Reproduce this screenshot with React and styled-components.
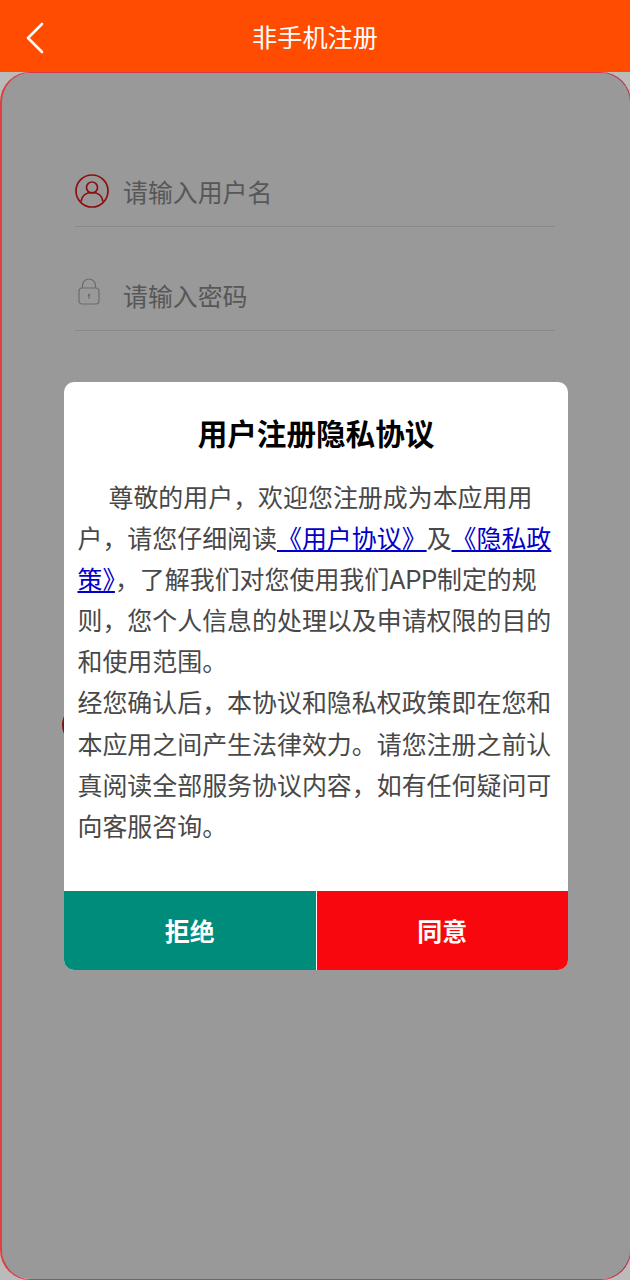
import React from "react";
import styled, { createGlobalStyle } from "styled-components";

const Global = createGlobalStyle`
  html, body { margin: 0; padding: 0; background: #bbb; }
  * { box-sizing: border-box; }
`;

const Page = styled.div`
  width: 630px;
  height: 1280px;
  display: flex;
  flex-direction: column;
  overflow: hidden;
  font-family: Roboto, "Noto Sans CJK SC", sans-serif;
  background: #bbb;
`;

const Header = styled.header`
  position: relative;
  height: 72px;
  flex: none;
  display: flex;
  align-items: center;
  justify-content: center;
  background: #ff4c00;
  color: #fff;
  font-size: 25.2px;
`;

const BackButton = styled.span`
  position: absolute;
  left: 24px;
  top: 22px;
  display: block;
  width: 22px;
  height: 32px;
`;

const Card = styled.main`
  position: relative;
  flex: 1;
  width: 631px;
  background: #fff;
  border: 1px solid #d93a4a;
  border-left: 2px solid #e2403c;
  border-radius: 30px;
  padding: 81px 0 0 73px;
`;

const Field = styled.div`
  width: 480px;
  height: 73px;
  margin-bottom: 31px;
  display: flex;
  align-items: center;
  border-bottom: 1px solid #e4e4e4;
  font-size: 24.9px;
  color: #929292;
`;

const IconSlot = styled.span`
  width: 48px;
  flex: none;
  display: flex;
  padding-left: ${(p) => p.$inset}px;
  margin-top: ${(p) => p.$top}px;
`;

const Placeholder = styled.span`
  margin-top: 2px;
`;

const Submit = styled.button`
  display: block;
  width: 490px;
  height: 40px;
  margin: 374px 0 0 -13px;
  border: 0;
  border-radius: 20px;
  background: #e01818;
`;

const Overlay = styled.div`
  position: absolute;
  inset: 0;
  display: flex;
  align-items: center;
  justify-content: center;
  border-radius: 28px;
  background: rgba(0, 0, 0, 0.4);
`;

const Dialog = styled.section`
  width: 504px;
  height: 588px;
  display: flex;
  flex-direction: column;
  overflow: hidden;
  border-radius: 10px;
  background: #fff;
`;

const Title = styled.h2`
  margin: 33px 0 0;
  text-align: center;
  font-size: 29.6px;
  line-height: 40px;
  font-weight: 700;
  color: #000;
`;

const Body = styled.div`
  flex: 1;
  padding: 23px 13px 0 13.5px;
  font-size: 24.95px;
  line-height: 41.1px;
  color: #484848;
`;

const Para = styled.p`
  margin: 0;
  text-indent: ${(p) => p.$indent || 0}px;
`;

const Link = styled.a`
  color: #0000c8;
  text-decoration: underline;
`;

const Actions = styled.div`
  display: flex;
  height: 79px;
  flex: none;
`;

const Action = styled.button`
  flex: 1;
  border: 0;
  padding: 0 0 2px;
  font: 700 25px Roboto, "Noto Sans CJK SC", sans-serif;
  color: #fff;
  background: ${(p) => p.$bg};
  & + & { border-left: 1px solid #fff; }
`;

const UserIcon = () => (
  <svg width="34" height="34" viewBox="0 0 34 34" fill="none" stroke="#e81c1c" strokeWidth="1.7">
    <circle cx="17" cy="17" r="16" />
    <circle cx="17" cy="13.5" r="5.5" />
    <path d="M6 27.5c1-6 5.500-9 11-9s10 3 11 9" />
  </svg>
);

const LockIcon = () => (
  <svg width="22" height="27" viewBox="0 0 22 27" fill="none" stroke="#b4b4b4" strokeWidth="1.2">
    <rect x="1" y="10" width="20" height="16" rx="3" />
    <path d="M4.500 10V7.500a6.500 6.500 0 0 1 13 0V10" />
    <circle cx="11" cy="17" r="1.200" fill="#b4b4b4" stroke="none" />
    <path d="M11 17v4" />
  </svg>
);

export default function App() {
  return (
    <Page>
      <Global />
      <Header>
        <BackButton>
          <svg width="22" height="32" viewBox="0 0 22 32" fill="none" stroke="#fff" strokeWidth="2.6" strokeLinecap="round" strokeLinejoin="round">
            <path d="M18 2 4 16l14 14" />
          </svg>
        </BackButton>
        非手机注册
      </Header>
      <Card>
        <Field>
          <IconSlot $inset={0} $top={2}><UserIcon /></IconSlot>
          <Placeholder>请输入用户名</Placeholder>
        </Field>
        <Field>
          <IconSlot $inset={3} $top={-6}><LockIcon /></IconSlot>
          <Placeholder>请输入密码</Placeholder>
        </Field>
        <Submit aria-label="注册" />
        <Overlay>
          <Dialog>
            <Title>用户注册隐私协议</Title>
            <Body>
              <Para $indent={31}>
                尊敬的用户，欢迎您注册成为本应用用户，请您仔细阅读<Link href="#">《用户协议》</Link>及<Link href="#">《隐私政策》</Link>，了解我们对您使用我们APP制定的规则，您个人信息的处理以及申请权限的目的和使用范围。
              </Para>
              <Para>
                经您确认后，本协议和隐私权政策即在您和本应用之间产生法律效力。请您注册之前认真阅读全部服务协议内容，如有任何疑问可向客服咨询。
              </Para>
            </Body>
            <Actions>
              <Action $bg="#008c7a">拒绝</Action>
              <Action $bg="#f8070f">同意</Action>
            </Actions>
          </Dialog>
        </Overlay>
      </Card>
    </Page>
  );
}
